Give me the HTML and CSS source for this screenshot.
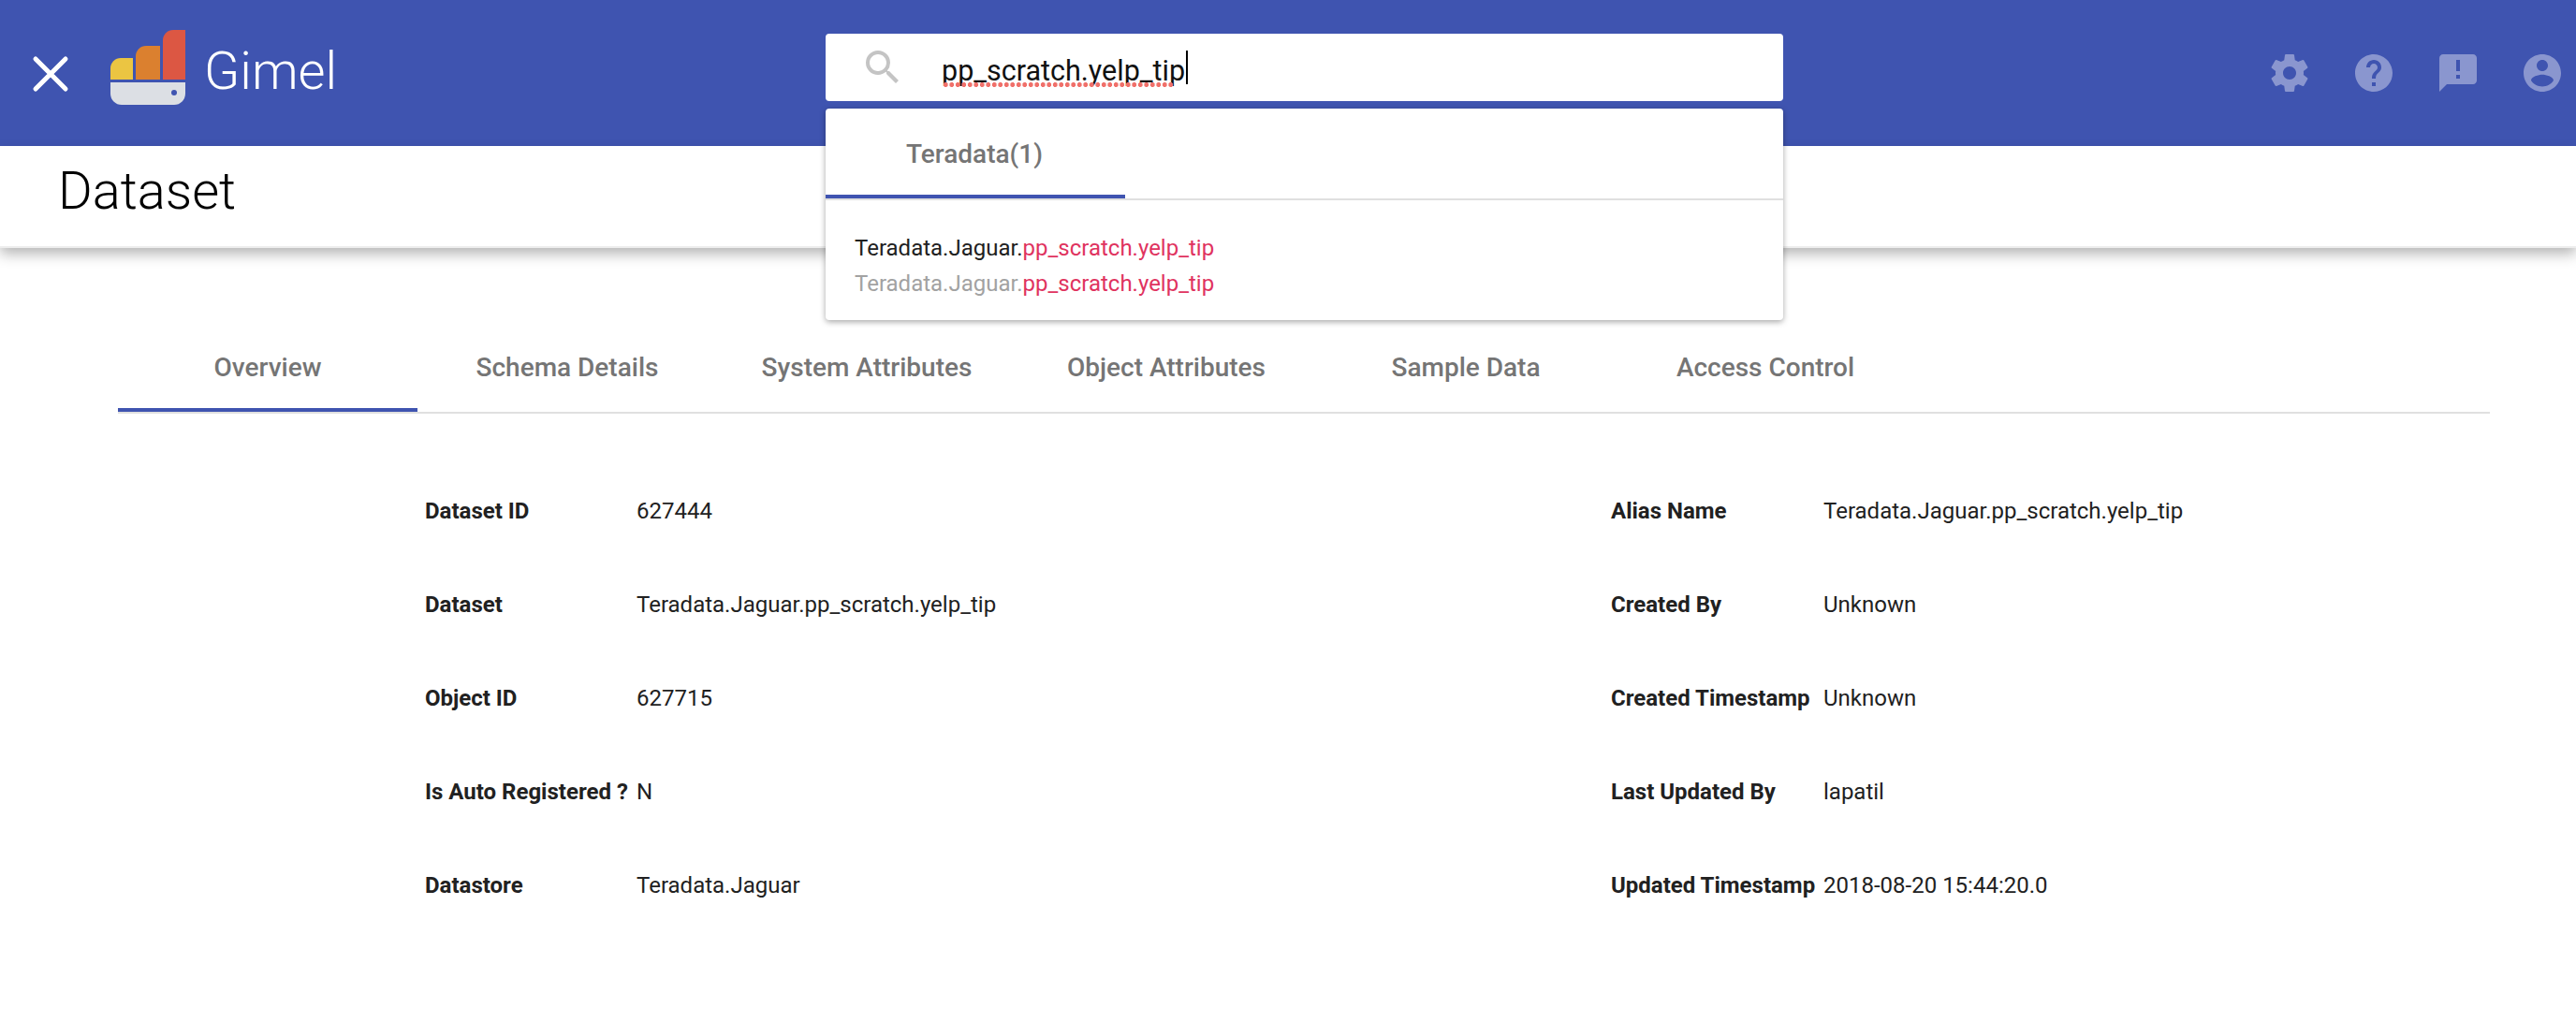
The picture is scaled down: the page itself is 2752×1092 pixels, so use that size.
FILE: index.html
```html
<!DOCTYPE html>
<html lang="en">
<head>
<meta charset="utf-8">
<title>Gimel</title>
<link rel="stylesheet" href="styles.css">
</head>
<body>
<header class="topbar">
  <svg class="close" width="40" height="40" viewBox="0 0 40 40"><path d="M4 4L36 36M36 4L4 36" stroke="#fff" stroke-width="5" stroke-linecap="round"/></svg>
  <svg class="logo" width="80" height="80" viewBox="0 0 80 80">
    <path d="M0 53V41a11 11 0 0 1 11-11H24V53z" fill="#ebc542"/>
    <path d="M27 53V28a11 11 0 0 1 11-11H53V53z" fill="#db802f"/>
    <path d="M56 53V11A11 11 0 0 1 67 0H80V53z" fill="#dc5743"/>
    <path d="M0 56H80V68a12 12 0 0 1-12 12H12A12 12 0 0 1 0 68z" fill="#dcdfe4"/>
    <circle cx="68" cy="67" r="3" fill="#3f54b0"/>
  </svg>
  <span class="brand">Gimel</span>
  <div class="search">
    <svg class="search-icon" width="48" height="48" viewBox="0 0 24 24"><path fill="#c4c4c4" d="M15.5 14h-.79l-.28-.27A6.47 6.47 0 0 0 16 9.5 6.5 6.5 0 1 0 9.5 16c1.61 0 3.09-.59 4.23-1.57l.27.28v.79l5 4.99L20.49 19l-4.99-5zm-6 0C7.01 14 5 11.99 5 9.5S7.01 5 9.5 5 14 7.01 14 9.5 11.99 14 9.5 14z"/></svg>
    <span class="query">pp_scratch.yelp_tip</span><span class="caret"></span>
  </div>
  <nav class="actions">
    <svg width="48" height="48" viewBox="0 0 24 24"><path d="M19.43 12.98c.04-.32.07-.64.07-.98s-.03-.66-.07-.98l2.11-1.65c.19-.15.24-.42.12-.64l-2-3.46c-.12-.22-.39-.3-.61-.22l-2.49 1c-.52-.4-1.08-.73-1.69-.98l-.38-2.65C14.46 2.18 14.25 2 14 2h-4c-.25 0-.46.18-.49.42l-.38 2.65c-.61.25-1.17.59-1.69.98l-2.49-1c-.23-.09-.49 0-.61.22l-2 3.46c-.13.22-.07.49.12.64l2.11 1.65c-.04.32-.07.65-.07.98s.03.66.07.98l-2.11 1.65c-.19.15-.24.42-.12.64l2 3.46c.12.22.39.3.61.22l2.49-1c.52.4 1.08.73 1.69.98l.38 2.65c.03.24.24.42.49.42h4c.25 0 .46-.18.49-.42l.38-2.65c.61-.25 1.17-.59 1.69-.98l2.49 1c.23.09.49 0 .61-.22l2-3.46c.12-.22.07-.49-.12-.64l-2.11-1.65zM12 15.5c-1.93 0-3.5-1.57-3.5-3.5s1.57-3.5 3.5-3.5 3.5 1.57 3.5 3.5-1.57 3.5-3.5 3.5z"/></svg>
    <svg width="48" height="48" viewBox="0 0 24 24"><path d="M12 2C6.48 2 2 6.48 2 12s4.48 10 10 10 10-4.48 10-10S17.52 2 12 2zm1 17h-2v-2h2v2zm2.07-7.75l-.9.92C13.45 12.9 13 13.5 13 15h-2v-.5c0-1.1.45-2.1 1.17-2.83l1.24-1.26c.37-.36.59-.86.59-1.41 0-1.1-.9-2-2-2s-2 .9-2 2H8c0-2.21 1.79-4 4-4s4 1.79 4 4c0 .88-.36 1.68-.93 2.25z"/></svg>
    <svg width="48" height="48" viewBox="0 0 24 24"><path d="M20 2H4c-1.1 0-1.99.9-1.99 2L2 22l4-4h14c1.1 0 2-.9 2-2V4c0-1.1-.9-2-2-2zm-7 9h-2V5h2v6zm0 4h-2v-2h2v2z"/></svg>
    <svg width="48" height="48" viewBox="0 0 24 24"><path d="M12 2C6.48 2 2 6.48 2 12s4.48 10 10 10 10-4.48 10-10S17.52 2 12 2zm0 3c1.66 0 3 1.34 3 3s-1.34 3-3 3-3-1.34-3-3 1.34-3 3-3zm0 14.2c-2.5 0-4.71-1.28-6-3.22.03-1.99 4-3.08 6-3.08 1.99 0 5.97 1.09 6 3.08-1.29 1.94-3.5 3.22-6 3.22z"/></svg>
  </nav>
</header>

<section class="titlebar"><h1 class="title">Dataset</h1></section>

<section class="dropdown">
  <div class="drop-tabs"><div class="tab drop-tab active">Teradata(1)</div></div>
  <ul class="results">
    <li>Teradata.Jaguar.<em>pp_scratch.yelp_tip</em></li>
    <li class="muted">Teradata.Jaguar.<em>pp_scratch.yelp_tip</em></li>
  </ul>
</section>

<main class="content">
  <div class="tabs">
    <div class="tab active">Overview</div>
    <div class="tab">Schema Details</div>
    <div class="tab">System Attributes</div>
    <div class="tab">Object Attributes</div>
    <div class="tab">Sample Data</div>
    <div class="tab">Access Control</div>
  </div>
  <div class="details">
    <dl class="col col-left">
      <dt>Dataset ID</dt><dd>627444</dd>
      <dt>Dataset</dt><dd>Teradata.Jaguar.pp_scratch.yelp_tip</dd>
      <dt>Object ID</dt><dd>627715</dd>
      <dt>Is Auto Registered ?</dt><dd>N</dd>
      <dt>Datastore</dt><dd>Teradata.Jaguar</dd>
    </dl>
    <dl class="col">
      <dt>Alias Name</dt><dd>Teradata.Jaguar.pp_scratch.yelp_tip</dd>
      <dt>Created By</dt><dd>Unknown</dd>
      <dt>Created Timestamp</dt><dd>Unknown</dd>
      <dt>Last Updated By</dt><dd>lapatil</dd>
      <dt>Updated Timestamp</dt><dd>2018-08-20 15:44:20.0</dd>
    </dl>
  </div>
</main>
</body>
</html>
```
FILE: styles.css
```css
* { box-sizing: border-box; }
html, body { margin: 0; height: 100%; overflow: hidden; background: #fff; }
body { font-family: Roboto, "Liberation Sans", sans-serif; position: relative; }

.topbar {
  height: 156px;
  background: #3f54b0;
  display: flex;
  align-items: flex-start;
  position: relative;
}
.close { margin: 59px 0 0 34px; flex: none; }
.logo { margin: 32px 0 0 44px; flex: none; }
.brand { margin: 37px 0 0 20px; font-size: 56px; font-weight: 300; line-height: 78px; color: #fff; width: 664px; flex: none; }
.search {
  width: 1023px; height: 72px; margin-top: 36px; background: #fff; border-radius: 4px;
  display: flex; align-items: center; padding-left: 37px; flex: none;
}
.search-icon { flex: none; margin-right: 39px; }
.query {
  position: relative;
  font-size: 30.5px; color: #111; line-height: 40px; margin-top: 7px;
}
.query::after {
  content: "";
  position: absolute; left: 1px; right: 11px; bottom: 3px; height: 5px;
  background: radial-gradient(circle at center, #f0706a 2.2px, transparent 2.8px) 0 0 / 6.5px 5px repeat-x;
}
.caret { width: 2px; height: 36px; background: #000; margin-left: 1px; }
.actions { margin: 54px 12px 0 auto; display: flex; gap: 42px; }
.actions svg { fill: #8a96cf; display: block; }

.titlebar {
  height: 107px; background: #fff; padding: 0 0 0 62px;
  box-shadow: 0 2px 0 #ededed, 0 8px 14px rgba(0,0,0,.3);
  position: relative;
}
.title { margin: 0; font-size: 56px; font-weight: 300; line-height: 96px; color: #000; }

.dropdown {
  position: absolute; left: 882px; top: 116px; width: 1023px; height: 226px;
  background: #fff; border-radius: 4px; z-index: 2;
  box-shadow: 0 2px 6px rgba(0,0,0,.35);
}
.drop-tabs { height: 98px; border-bottom: 2px solid #e0e0e0; display: flex; }
.tab {
  display: flex; align-items: center; justify-content: center;
  font-size: 28px; font-weight: 500; color: #757575;
  border-bottom: 4px solid transparent;
}
.tab.active { border-bottom-color: #3f54b0; }
.drop-tab { width: 320px; padding-top: 4px; padding-right: 2px; }
.results { list-style: none; margin: 0; padding: 32px 0 0 31px; }
.results li { font-size: 24px; line-height: 38px; color: #212121; }
.results li.muted { color: #a2a2a2; }
.results em { font-style: normal; color: #e0335f; }

.content { padding: 0 92px 0 126px; }
.tabs { margin-top: 85px; height: 94px; border-bottom: 2px solid #e0e0e0; display: grid; grid-template-columns: repeat(6, 320px); }

.details { display: grid; grid-template-columns: 1267px 1fr; padding: 82px 0 0 328px; }
.col {
  margin: 0;
  display: grid; grid-template-columns: 227px 1fr; grid-auto-rows: 100px;
  font-size: 24px; color: #212121;
}
.col-left { grid-template-columns: 226px 1fr; }
.col dt { font-weight: 700; line-height: 44px; white-space: nowrap; }
.col dd { margin: 0; font-weight: 400; line-height: 44px; }
```
